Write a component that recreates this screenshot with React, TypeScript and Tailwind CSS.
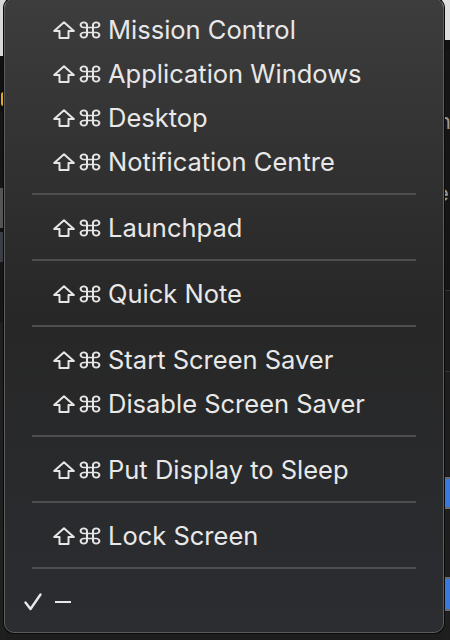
import React from "react";

type Item = { label: string } | "sep";

const items: Item[] = [
  { label: "Mission Control" },
  { label: "Application Windows" },
  { label: "Desktop" },
  { label: "Notification Centre" },
  "sep",
  { label: "Launchpad" },
  "sep",
  { label: "Quick Note" },
  "sep",
  { label: "Start Screen Saver" },
  { label: "Disable Screen Saver" },
  "sep",
  { label: "Put Display to Sleep" },
  "sep",
  { label: "Lock Screen" },
  "sep",
];

function ShiftIcon() {
  return (
    <svg width="22" height="18" viewBox="0 0 22 18" fill="none">
      <path
        d="M11 1.2 L20.8 10 H15.5 V17 H6.5 V10 H1.2 Z"
        stroke="#e6e6e6"
        strokeWidth="2"
        strokeLinejoin="round"
      />
    </svg>
  );
}

function CmdIcon() {
  return (
    <svg width="22" height="18" viewBox="0 0 22 22" fill="none" preserveAspectRatio="none">
      <path
        d="M8 8 H14 V14 H8 Z M8 8 H4.8 A3.2 3.2 0 1 1 8 4.8 Z M14 8 V4.8 A3.2 3.2 0 1 1 17.2 8 Z M14 14 H17.2 A3.2 3.2 0 1 1 14 17.2 Z M8 14 V17.2 A3.2 3.2 0 1 1 4.8 14 Z"
        stroke="#e6e6e6"
        strokeWidth="2"
        strokeLinejoin="round"
      />
    </svg>
  );
}

function Row({ label }: { label: string }) {
  return (
    <div className="flex h-[44px] items-center pl-[48px]">
      <div className="flex items-center gap-[4px]">
        <ShiftIcon />
        <CmdIcon />
      </div>
      <span className="ml-[7px] text-[25.5px] leading-none text-[#e8e8e8]">{label}</span>
    </div>
  );
}

export default function App() {
  return (
    <div
      className="relative h-[640px] w-[450px] overflow-hidden bg-[#1d1d1d]"
      style={{ fontFamily: "Inter, 'Noto Sans', sans-serif" }}
    >
      {/* background app, left edge */}
      <div className="absolute left-0 top-0 flex h-full w-[6px] flex-col">
        <div className="h-[56px] bg-[#d9d9d9]" />
        <div className="h-[30px] bg-[#111]" />
        <div className="h-[26px] bg-[#111]">
          <div className="ml-[1px] mt-[6px] h-[14px] w-[5px] rounded-full bg-[#e0a92a]" />
        </div>
        <div className="h-[76px] bg-[#151515]" />
        <div className="h-[40px] bg-[#555]" />
        <div className="h-[4px] bg-[#111]" />
        <div className="h-[30px] bg-[#3b3f45]" />
        <div className="h-[60px] bg-[#161616]" />
        <div className="flex-1 bg-[#1f1f1f]" />
      </div>
      {/* background app, right edge */}
      <div className="absolute right-0 top-0 flex h-full w-[8px] flex-col">
        <div className="h-[40px] bg-[#e0e0e0]" />
        <div className="h-[10px] bg-[#111]" />
        <div className="h-[240px] bg-[#151515] text-[22px] leading-none text-[#9a9a9a]">
          <div className="mt-[60px] -ml-[4px]">n</div>
          <div className="mt-[50px] -ml-[6px]">e</div>
        </div>
        <div className="h-[1px] bg-[#333]" />
        <div className="h-[80px] bg-[#1b1b1b]" />
        <div className="h-[1px] bg-[#333]" />
        <div className="flex-1 bg-[#1e1e1e]" />
      </div>
      <div className="absolute right-[-6px] top-[477px] h-[32px] w-[18px] rounded-[7px] border-2 border-[#6a6a6a] bg-[#3878df]" />
      <div className="absolute right-[-6px] top-[577px] h-[34px] w-[18px] rounded-[7px] border-2 border-[#6a6a6a] bg-[#3878df]" />

      {/* menu */}
      <div className="absolute left-[4px] top-[-2px] w-[440px] rounded-[10px] border border-[#5c5c5c] bg-gradient-to-b from-[#3d3d3d] via-[#272727] to-[#2b2d31] pb-[8px] pt-[9px] shadow-[0_0_0_1px_#0a0a0a]">
        {items.map((it, i) =>
          it === "sep" ? (
            <div key={i} className="flex h-[22px] items-center px-[27px]">
              <div className="-mt-[2px] h-[2px] w-full bg-[#4e4e4e]" />
            </div>
          ) : (
            <Row key={i} label={it.label} />
          )
        )}
        <div className="flex h-[44px] items-center pl-[18px]">
          <svg width="20" height="20" viewBox="0 0 20 20" fill="none">
            <path
              d="M2.5 10.5 L7.5 17 L17.5 2.5"
              stroke="#e8e8e8"
              strokeWidth="2.4"
              strokeLinecap="round"
              strokeLinejoin="round"
            />
          </svg>
          <div className="ml-[12px] h-[2px] w-[16px] bg-[#e8e8e8]" />
        </div>
      </div>
    </div>
  );
}
